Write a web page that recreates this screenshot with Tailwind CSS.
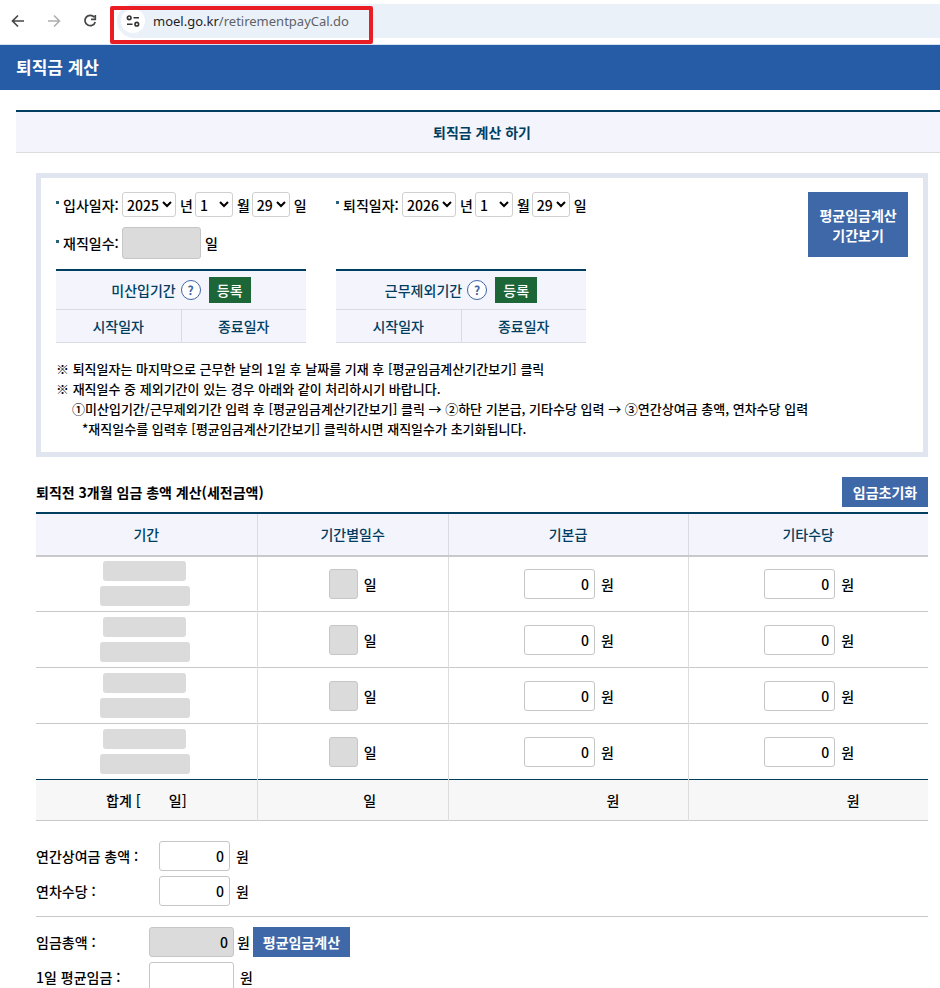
<!DOCTYPE html>
<html lang="ko">
<head>
    <meta charset="UTF-8">
    <meta name="viewport" content="width=device-width, initial-scale=1.0">
    <title>퇴직금 계산</title>
    <script src="https://cdn.jsdelivr.net/npm/@tailwindcss/browser@4"></script>
</head>
<body class="bg-white text-black text-sm font-medium font-['Noto_Sans_CJK_KR',sans-serif]">
    <!-- Browser bar -->
    <div class="relative flex items-start h-[45px] border-b border-[#d5e3f5] pt-1 pl-[9px]">
        <div class="flex items-center h-[34px] gap-[18px]">
            <button type="button" aria-label="뒤로" class="w-[18px] h-[18px] text-[#474747]">
                <svg viewBox="0 0 18 18" class="w-[18px] h-[18px]" fill="none" stroke="currentColor" stroke-width="1.7"><path d="M15 9H4M9 3.5L3.5 9L9 14.5"/></svg>
            </button>
            <button type="button" aria-label="앞으로" class="w-[18px] h-[18px] text-[#adadad]">
                <svg viewBox="0 0 18 18" class="w-[18px] h-[18px]" fill="none" stroke="currentColor" stroke-width="1.5"><path d="M3 9H14M9 3.5L14.5 9L9 14.5"/></svg>
            </button>
            <button type="button" aria-label="새로고침" class="w-[18px] h-[18px] text-[#474747]">
                <svg viewBox="0 0 18 18" class="w-[18px] h-[18px]" fill="none" stroke="currentColor" stroke-width="1.7"><path d="M13.3 5.3A5.2 5.2 0 1 0 14.2 9.9M14.3 3V7.3H10"/></svg>
            </button>
        </div>
        <div class="flex flex-1 items-center h-[34px] ml-[18px] pl-1 rounded-l-full bg-[#ebf1f9]">
            <span class="flex items-center justify-center w-6 h-6 rounded-full bg-white">
                <svg viewBox="0 0 16 16" class="w-4 h-4" fill="none" stroke="#333" stroke-width="1.6"><circle cx="4.2" cy="4.8" r="1.8"/><path d="M8.5 4.8H14M2 11.2H7.5"/><circle cx="11.8" cy="11.2" r="1.8"/></svg>
            </span>
            <p class="ml-2 text-[13px] font-normal text-[#5f6368] font-['Noto_Sans',sans-serif]"><span class="text-[#1f1f1f]">moel.go.kr</span>/retirementpayCal.do</p>
        </div>
        <div class="absolute left-[110px] top-[6px] w-[263px] h-[38px] border-4 border-[#ea1d25] rounded-[2px]"></div>
    </div>

    <header class="flex items-center h-[45px] px-4 bg-[#255ca5]">
        <h1 class="text-[17px] font-bold text-white">퇴직금 계산</h1>
    </header>

    <main class="pt-5 pl-4">
        <h2 class="flex items-center justify-center h-[43px] pl-2 border-t-2 border-t-[#003e5f] border-b border-b-[#dcdcdc] bg-[#f3f4fc] text-[#003e5f] font-bold">퇴직금 계산 하기</h2>

        <div class="pl-5 pr-3">
            <!-- Period box -->
            <section class="flex items-start justify-between mt-5 pt-[14px] px-[15px] pb-[13px] border-[5px] border-[#e1e5f0]">
                <div class="flex-1">
                    <div class="flex">
                        <div class="flex items-center w-[280px] h-[25px]">
                            <i class="w-[3px] h-[3px] mb-1 mr-1 bg-[#2b5f7c]"></i>
                            <label for="inYear" class="w-[59px] whitespace-nowrap">입사일자:</label>
                            <select id="inYear" class="w-[54px] h-[25px] border border-[#d0d0d0] rounded-[3px]"><option>2025</option></select>
                            <label for="inYear" class="ml-1">년</label>
                            <select id="inMonth" aria-label="입사 월" class="w-[38px] h-[25px] ml-[2px] border border-[#d0d0d0] rounded-[3px]"><option>1</option></select>
                            <label for="inMonth" class="ml-1">월</label>
                            <select id="inDay" aria-label="입사 일" class="w-[38px] h-[25px] ml-[2px] border border-[#d0d0d0] rounded-[3px]"><option>29</option></select>
                            <label for="inDay" class="ml-1">일</label>
                        </div>
                        <div class="flex items-center h-[25px]">
                            <i class="w-[3px] h-[3px] mb-1 mr-1 bg-[#2b5f7c]"></i>
                            <label for="outYear" class="w-[59px] whitespace-nowrap">퇴직일자:</label>
                            <select id="outYear" class="w-[54px] h-[25px] border border-[#d0d0d0] rounded-[3px]"><option>2026</option></select>
                            <label for="outYear" class="ml-1">년</label>
                            <select id="outMonth" aria-label="퇴직 월" class="w-[38px] h-[25px] ml-[2px] border border-[#d0d0d0] rounded-[3px]"><option>1</option></select>
                            <label for="outMonth" class="ml-1">월</label>
                            <select id="outDay" aria-label="퇴직 일" class="w-[38px] h-[25px] ml-[2px] border border-[#d0d0d0] rounded-[3px]"><option>29</option></select>
                            <label for="outDay" class="ml-1">일</label>
                        </div>
                    </div>
                    <div class="flex items-center mt-[10px]">
                        <i class="w-[3px] h-[3px] mb-1 mr-1 bg-[#2b5f7c]"></i>
                        <label for="workDays" class="w-[59px] whitespace-nowrap">재직일수:</label>
                        <input id="workDays" type="text" readonly class="w-[79px] h-8 border border-[#c6c6c6] rounded-[3px] bg-[#dbdbdb]">
                        <span class="ml-1">일</span>
                    </div>

                    <div class="flex gap-[30px] mt-[10px]">
                        <table class="w-[250px] table-fixed text-center text-[#003e5f] bg-[#f3f4fc] border-t-2 border-[#003e5f]">
                            <tr class="h-[39px] border-b border-[#d9dbe2]">
                                <th colspan="2" class="font-medium">
                                    <div class="flex items-center justify-center">미산입기간
                                        <button type="button" class="w-5 h-5 ml-[5px] border border-[#3f66a5] rounded-full bg-white text-[#3f66a5] text-xs leading-none font-bold">?</button>
                                        <button type="button" class="w-[42px] h-[26px] ml-2 bg-[#1d6637] text-white">등록</button>
                                    </div>
                                </th>
                            </tr>
                            <tr class="h-[33px] border-b border-[#d9dbe2]">
                                <th class="font-medium border-r border-[#d9dbe2]">시작일자</th>
                                <th class="font-medium">종료일자</th>
                            </tr>
                        </table>
                        <table class="w-[250px] table-fixed text-center text-[#003e5f] bg-[#f3f4fc] border-t-2 border-[#003e5f]">
                            <tr class="h-[39px] border-b border-[#d9dbe2]">
                                <th colspan="2" class="font-medium">
                                    <div class="flex items-center justify-center">근무제외기간
                                        <button type="button" class="w-5 h-5 ml-[5px] border border-[#3f66a5] rounded-full bg-white text-[#3f66a5] text-xs leading-none font-bold">?</button>
                                        <button type="button" class="w-[42px] h-[26px] ml-2 bg-[#1d6637] text-white">등록</button>
                                    </div>
                                </th>
                            </tr>
                            <tr class="h-[33px] border-b border-[#d9dbe2]">
                                <th class="font-medium border-r border-[#d9dbe2]">시작일자</th>
                                <th class="font-medium">종료일자</th>
                            </tr>
                        </table>
                    </div>

                    <div class="mt-4 text-[13px] leading-5 whitespace-nowrap">
                        <p>※ 퇴직일자는 마지막으로 근무한 날의 1일 후 날짜를 기재 후 [평균임금계산기간보기] 클릭</p>
                        <p>※ 재직일수 중 제외기간이 있는 경우 아래와 같이 처리하시기 바랍니다.</p>
                        <p class="pl-4">①미산입기간/근무제외기간 입력 후 [평균임금계산기간보기] 클릭 → ②하단 기본급, 기타수당 입력 → ③연간상여금 총액, 연차수당 입력</p>
                        <p class="pl-[26px]">*재직일수를 입력후 [평균임금계산기간보기] 클릭하시면 재직일수가 초기화됩니다.</p>
                    </div>
                </div>
                <button type="button" class="w-[100px] h-[65px] bg-[#3f68a8] text-white font-bold leading-5">평균임금계산<br>기간보기</button>
            </section>

            <!-- Wages of the last 3 months -->
            <div class="flex items-center justify-between mt-5 mb-[5px]">
                <h3 class="font-bold">퇴직전 3개월 임금 총액 계산(세전금액)</h3>
                <button type="button" class="w-[86px] h-[30px] bg-[#3f68a8] text-white font-bold">임금초기화</button>
            </div>
            <table class="w-full table-fixed text-center border-t-2 border-[#003e5f]">
                <colgroup>
                    <col class="w-[24.8%]">
                    <col class="w-[21.4%]">
                    <col class="w-[26.9%]">
                    <col class="w-[26.9%]">
                </colgroup>
                <thead class="bg-[#f3f4fc] text-[#003e5f]">
                    <tr class="h-[43px] border-b-2 border-[#c9c9cb]">
                        <th class="font-medium border-r border-[#d9dbe2]">기간</th>
                        <th class="font-medium border-r border-[#d9dbe2]">기간별일수</th>
                        <th class="font-medium border-r border-[#d9dbe2]">기본급</th>
                        <th class="font-medium">기타수당</th>
                    </tr>
                </thead>
                <tbody id="wageRows"></tbody>
                <tfoot class="bg-[#f7f7f7]">
                    <tr class="h-[41px] border-b border-[#c9c9c9]">
                        <td class="border-r border-[#dcdcdc]">합계 [<span class="inline-block w-7"></span>일]</td>
                        <td class="pl-[34px] border-r border-[#dcdcdc]">일</td>
                        <td class="pl-[90px] border-r border-[#dcdcdc]">원</td>
                        <td class="pl-[90px]">원</td>
                    </tr>
                </tfoot>
            </table>

            <!-- Yearly amounts -->
            <div class="flex flex-col gap-[5px] mt-5 pb-[10px] border-b border-[#c9c9c9]">
                <div class="flex items-center">
                    <label for="bonus" class="w-[123px]">연간상여금 총액 :</label>
                    <input id="bonus" type="text" value="0" class="w-[71px] h-[30px] px-[5px] border border-[#c6c6c6] rounded-[3px] text-right">
                    <span class="ml-[6px]">원</span>
                </div>
                <div class="flex items-center">
                    <label for="leavePay" class="w-[123px]">연차수당 :</label>
                    <input id="leavePay" type="text" value="0" class="w-[71px] h-[30px] px-[5px] border border-[#c6c6c6] rounded-[3px] text-right">
                    <span class="ml-[6px]">원</span>
                </div>
            </div>

            <!-- Result -->
            <div class="flex flex-col gap-[5px] mt-[10px]">
                <div class="flex items-center">
                    <label for="total" class="w-[113px]">임금총액 :</label>
                    <input id="total" type="text" value="0" readonly class="w-[85px] h-[30px] px-[5px] border border-[#c6c6c6] rounded-[3px] bg-[#dbdbdb] text-right">
                    <span class="ml-[3px]">원</span>
                    <button type="button" class="w-[97px] h-[30px] ml-[3px] bg-[#3f68a8] text-white font-bold">평균임금계산</button>
                </div>
                <div class="flex items-center">
                    <label for="average" class="w-[113px]">1일 평균임금 :</label>
                    <input id="average" type="text" class="w-[85px] h-[30px] px-[5px] border border-[#c6c6c6] rounded-[3px] text-right">
                    <span class="ml-[6px]">원</span>
                </div>
            </div>
        </div>
    </main>

    <script>
        const rows = document.getElementById('wageRows');

        for (let i = 1; i <= 4; i++) {
            const tr = document.createElement('tr');
            // the last row closes with the dark line above the totals
            tr.className = i === 4 ? 'h-14 border-b border-[#003e5f]' : 'h-14 border-b border-[#c9c9c9]';
            tr.innerHTML = `
                <td class="border-r border-[#dcdcdc]">
                    <div class="flex flex-col items-center gap-[5px] pr-[3px]">
                        <input type="text" readonly aria-label="시작일 ${i}" class="w-[83px] h-5 rounded-[3px] bg-[#dbdbdb]">
                        <input type="text" readonly aria-label="종료일 ${i}" class="w-[90px] h-5 rounded-[3px] bg-[#dbdbdb]">
                    </div>
                </td>
                <td class="border-r border-[#dcdcdc]">
                    <div class="flex items-center justify-center">
                        <input id="days${i}" type="text" readonly class="w-[29px] h-[30px] border border-[#c6c6c6] rounded-[3px] bg-[#dbdbdb]">
                        <label for="days${i}" class="ml-[6px]">일</label>
                    </div>
                </td>
                <td class="border-r border-[#dcdcdc]">
                    <div class="flex items-center justify-center pl-[2px]">
                        <input id="base${i}" type="text" value="0" class="w-[71px] h-[30px] px-[5px] border border-[#c6c6c6] rounded-[3px] text-right">
                        <label for="base${i}" class="ml-[6px]">원</label>
                    </div>
                </td>
                <td>
                    <div class="flex items-center justify-center pl-[2px]">
                        <input id="extra${i}" type="text" value="0" class="w-[71px] h-[30px] px-[5px] border border-[#c6c6c6] rounded-[3px] text-right">
                        <label for="extra${i}" class="ml-[6px]">원</label>
                    </div>
                </td>
            `;
            rows.appendChild(tr);
        }
    </script>
</body>
</html>
